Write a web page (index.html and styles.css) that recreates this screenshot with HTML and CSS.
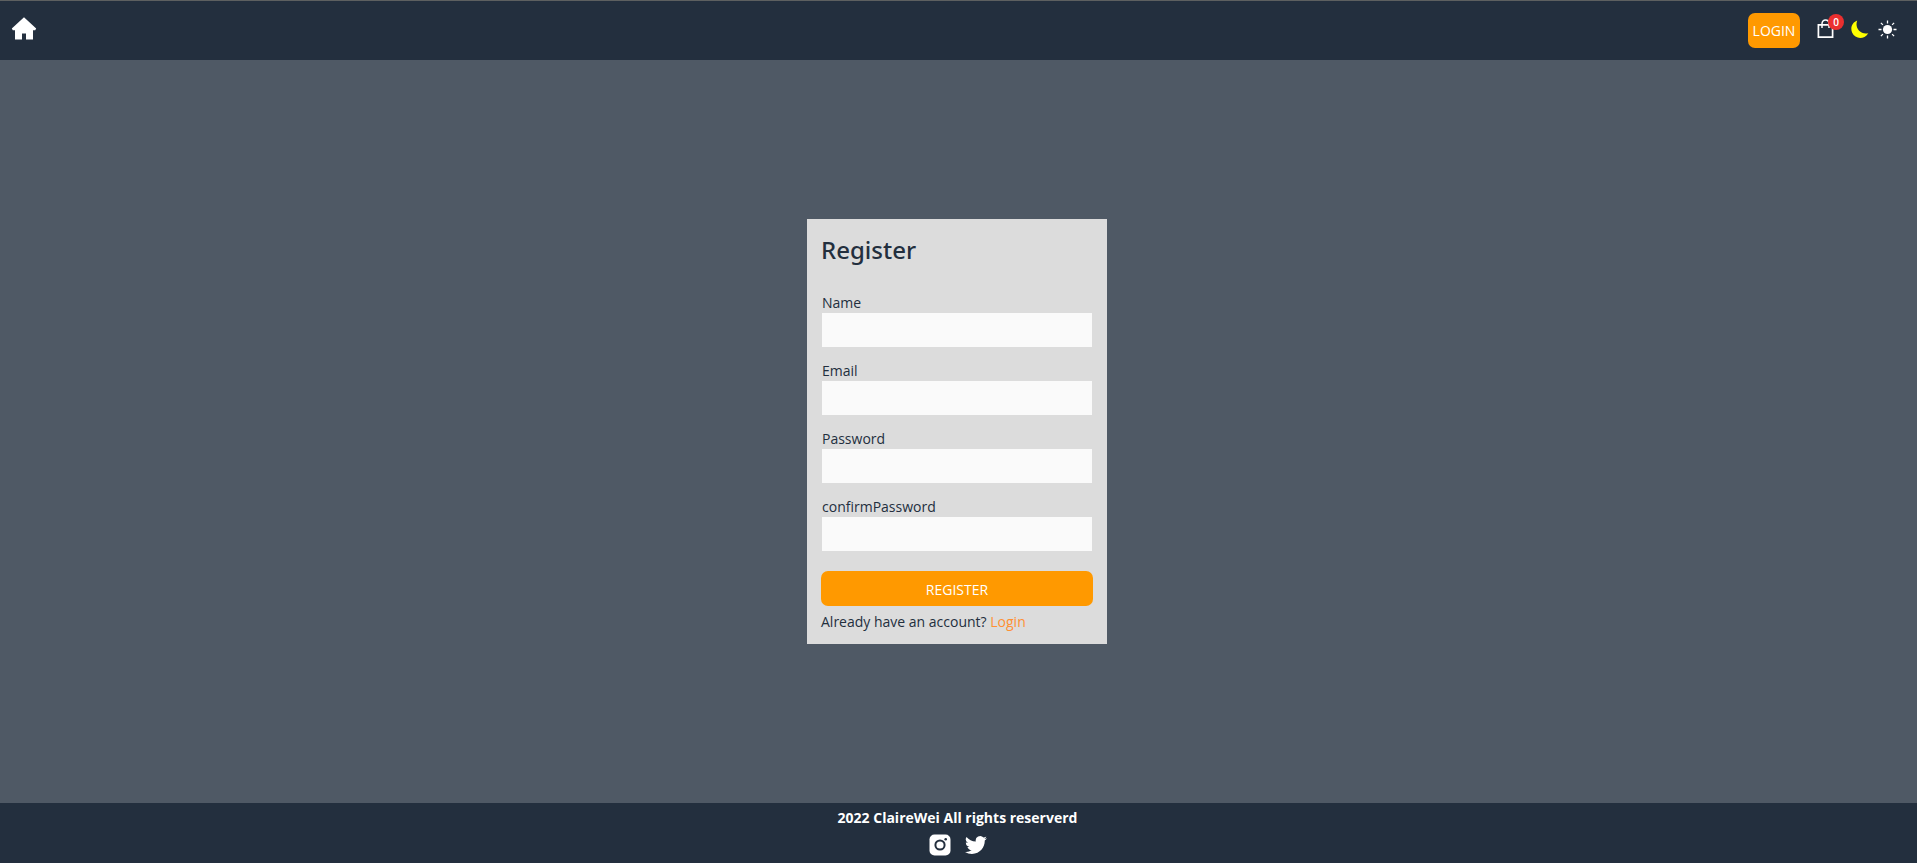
FILE: index.html
```html
<!DOCTYPE html>
<html lang="en">
<head>
<meta charset="utf-8">
<title>Register</title>
<link rel="stylesheet" href="styles.css">
</head>
<body>
<header class="header">
  <a class="home" href="#" aria-label="Home">
    <svg width="26" height="26" viewBox="0 0 26 26" fill="#fff"><path d="M13 1.2 25.2 12.6 24.2 14.2H22V23.6H15V17.5H11V23.6H4V14.2H1.8L.8 12.6Z"/></svg>
  </a>
  <nav class="tools">
    <button class="btn login" type="button">LOGIN</button>
    <a class="cart" href="#" aria-label="Cart">
      <svg width="18" height="20" viewBox="0 0 18 20" fill="none" stroke="#fff"><path stroke-width="1.7" d="M1.4 5.8H15.6V18.1H1.4Z"/><path stroke-width="1.5" d="M5 9V4.8C5 2.2 6.500 1 8.500 1S12 2.200 12 4.800V9"/></svg>
      <span class="badge">0</span>
    </a>
    <button class="icon moon" type="button" aria-label="Dark mode">
      <svg width="18" height="19" viewBox="0 0 18 19" fill="#ff0"><path d="M6.200.5C1 2.500-1 8 1.200 12.800 4 18.800 12.500 20.500 17.300 13.200 9 14.800 3.500 8 6.200.5Z"/></svg>
    </button>
    <button class="icon" type="button" aria-label="Light mode">
      <svg width="19" height="19" viewBox="0 0 19 19"><circle cx="9.500" cy="9.500" r="4.600" fill="#fff"/><path stroke="#fff" stroke-width="1.300" d="M9.500 .5V3.500M9.500 15.500V18.500M.5 9.500H3.500M15.500 9.500H18.500M2.900 2.900 4.900 4.900M14.100 14.100 16.100 16.100M2.900 16.100 4.900 14.100M14.100 4.900 16.100 2.900"/></svg>
    </button>
  </nav>
</header>
<main class="main">
  <form class="card">
    <h1 class="title">Register</h1>
    <div class="field"><label for="name">Name</label><input id="name" type="text"></div>
    <div class="field"><label for="email">Email</label><input id="email" type="email"></div>
    <div class="field"><label for="password">Password</label><input id="password" type="password"></div>
    <div class="field"><label for="confirm">confirmPassword</label><input id="confirm" type="password"></div>
    <button class="btn submit" type="submit">REGISTER</button>
    <p class="note">Already have an account? <a href="#">Login</a></p>
  </form>
</main>
<footer class="footer">
  <p class="copy">2022 ClaireWei All rights reserverd</p>
  <div class="social">
    <a href="#" aria-label="Instagram">
      <svg width="22" height="22" viewBox="0 0 22 22"><rect x=".5" y=".5" width="21" height="21" rx="5" fill="#fff"/><circle cx="11" cy="11" r="4.600" fill="none" stroke="#232f3e" stroke-width="2"/><circle cx="16.700" cy="5.200" r="1.300" fill="#232f3e"/></svg>
    </a>
    <a href="#" aria-label="Twitter">
      <svg width="22" height="22" viewBox="0 0 24 24" fill="#fff"><path d="M23.950 4.570a10 10 0 0 1-2.820.780 4.960 4.960 0 0 0 2.160-2.730c-.950.560-2 .960-3.130 1.190a4.920 4.920 0 0 0-8.380 4.480C7.690 8.090 4.070 6.130 1.640 3.160a4.920 4.920 0 0 0 1.520 6.570 4.900 4.900 0 0 1-2.230-.610v.060a4.920 4.920 0 0 0 3.950 4.830 5 5 0 0 1-2.210.080 4.940 4.940 0 0 0 4.600 3.420A9.870 9.870 0 0 1 0 19.540a13.990 13.990 0 0 0 7.550 2.210c9.050 0 14-7.500 14-13.980 0-.210 0-.420-.020-.630a9.940 9.940 0 0 0 2.460-2.550Z"/></svg>
    </a>
  </div>
</footer>
</body>
</html>
```
FILE: styles.css
```css
* {
  box-sizing: border-box;
}

body {
  margin: 0;
  min-height: 100vh;
  display: flex;
  flex-direction: column;
  background: #4f5965;
  color: #232f3e;
  font: 14px/20px "Segoe UI", "Open Sans", "Noto Sans", sans-serif;
}

svg {
  display: block;
}

a {
  color: inherit;
  text-decoration: none;
}

button {
  font: inherit;
  border: 0;
  cursor: pointer;
}

.header {
  display: flex;
  align-items: center;
  justify-content: space-between;
  height: 60px;
  padding: 0 20px 0 11px;
  border-top: 1px solid #5d6060;
  background: #232f3e;
}

.home {
  padding-bottom: 4px;
}

.tools {
  display: flex;
  align-items: center;
}

.btn {
  height: 35px;
  padding: 0 4px;
  border-radius: 7px;
  background: #ff9900;
  color: #fff;
}

.login {
  width: 52px;
  margin-right: 17px;
}

.cart {
  position: relative;
  margin-right: 16px;
  padding-bottom: 4px;
}

.badge {
  position: absolute;
  top: -5px;
  left: 11px;
  width: 16px;
  height: 16px;
  border-radius: 50%;
  background: #eb2f2f;
  color: #fff;
  font-size: 10px;
  font-weight: 600;
  line-height: 16px;
  text-align: center;
}

.icon {
  padding: 0 0 2px;
  background: none;
}

.moon {
  margin-right: 9px;
}

.main {
  flex: 1;
  display: flex;
  align-items: center;
  justify-content: center;
  padding-right: 3px;
}

.card {
  width: 300px;
  padding: 14px 14px 12px;
  background: #dcdcdc;
}

.title {
  margin: 0 0 25px;
  font-family: "Segoe UI", "Noto Sans", sans-serif;
  font-size: 24px;
  font-weight: 500;
  line-height: 34px;
}

.field {
  display: flex;
  flex-direction: column;
  margin: 0 1px 13px;
}

.field label {
  padding-top: 1px;
}

.field input {
  height: 34px;
  margin: 0;
  padding: 0 10px;
  border: 0;
  background: #fafafa;
  font: inherit;
}

.submit {
  width: 100%;
  padding-top: 2px;
  margin-top: 7px;
}

.note {
  margin: 6px 0 0;
}

.note a {
  color: #ff9033;
}

.footer {
  display: flex;
  flex-direction: column;
  align-items: center;
  height: 60px;
  padding: 5px 2px 0 0;
  background: #232f3e;
  color: #fff;
}

.copy {
  margin: 0 0 6px;
  font-weight: 700;
}

.social {
  display: flex;
  gap: 14px;
}
```
